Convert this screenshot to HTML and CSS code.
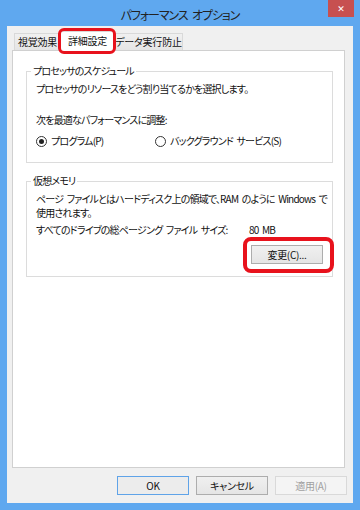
FILE: index.html
```html
<!DOCTYPE html>
<html lang="ja">
<head>
<meta charset="utf-8">
<link rel="stylesheet" href="styles.css">
</head>
<body>
<div class="window">
  <div class="titlebar">
    <span class="title">パフォーマンス オプション</span>
    <span class="close">✕</span>
  </div>
  <div class="client">
    <div class="tabs">
      <div class="tab">視覚効果</div>
      <div class="tab selected">詳細設定</div>
      <div class="tab">データ実行防止</div>
    </div>
    <div class="panel">
      <fieldset class="group g1">
        <legend>プロセッサのスケジュール</legend>
        <div class="line">プロセッサのリソースをどう割り当てるかを選択します。</div>
        <div class="line adjust">次を最適なパフォーマンスに調整:</div>
        <div class="radios">
          <span class="radio checked"><span class="dot"></span>プログラム(P)</span>
          <span class="radio"><span class="dot"></span>バックグラウンド サービス(S)</span>
        </div>
      </fieldset>
      <fieldset class="group g2">
        <legend>仮想メモリ</legend>
        <div class="para">ページ ファイルとはハードディスク上の領域で、RAM のように Windows で</div>
        <div class="para">使用されます。</div>
        <div class="size-row"><span>すべてのドライブの総ページング ファイル サイズ:</span><span>80 MB</span></div>
        <div class="btn-row"><span class="btn marked">変更(C)...</span></div>
      </fieldset>
    </div>
    <div class="buttons">
      <span class="btn default">OK</span>
      <span class="btn">キャンセル</span>
      <span class="btn disabled">適用(A)</span>
    </div>
  </div>
</div>
</body>
</html>
```
FILE: styles.css
```css
* { box-sizing: border-box; }
html, body { margin: 0; padding: 0; }
body {
  width: 360px;
  height: 510px;
  font-family: "Noto Sans CJK JP", "Noto Sans", sans-serif;
  font-feature-settings: "palt";
  font-size: 10px;
  letter-spacing: -0.8px;
  word-spacing: 2px;
  color: #111;
  overflow: hidden;
  white-space: nowrap;
}
.window {
  width: 360px;
  height: 510px;
  background: #5fa8ef;
  padding: 0 7px 7px 7px;
  display: flex;
  flex-direction: column;
}
.titlebar {
  position: relative;
  height: 26px;
  display: flex;
  justify-content: center;
  align-items: center;
}
.title {
  font-size: 12px;
  letter-spacing: -1.1px;
  word-spacing: 3px;
  color: #222;
  padding-top: 2px;
}
.close {
  position: absolute;
  top: 0;
  right: -1px;
  display: flex;
  align-items: center;
  justify-content: center;
  width: 26px;
  height: 17px;
  background: #c75050;
  color: #fff;
  font-family: "DejaVu Sans", sans-serif;
  letter-spacing: 0;
  font-size: 9px;
  font-weight: bold;
}
.client {
  flex: 1;
  background: #f0f0f0;
  padding: 5px 6px 8px 5px;
  display: flex;
  flex-direction: column;
}
.tabs {
  height: 19px;
  display: flex;
  align-items: flex-end;
  padding-left: 2px;
}
.tab {
  flex-shrink: 0;
  height: 17px;
  line-height: 15px;
  border: 1px solid #d9d9d9;
  border-bottom: none;
  background: linear-gradient(#f0f0f0, #e5e5e5);
  text-align: center;
  padding: 0;
  margin-right: -1px;
  letter-spacing: -0.2px;
}
.tab:nth-child(1) { width: 47px; }
.tab:nth-child(3) { width: 69px; }
.tab.selected {
  position: relative;
  width: 55px;
  height: 20px;
  margin-bottom: -1px;
  background: #fff;
  z-index: 2;
  line-height: 17px;
}
.tab.selected::after {
  content: "";
  position: absolute;
  left: -3px;
  right: -2px;
  top: -4px;
  bottom: -3px;
  border: 3.5px solid #e8121c;
  border-radius: 6px;
}
.panel {
  flex: 1;
  margin-right: 2px;
  background: #fff;
  border: 1px solid #d0d0d0;
  padding: 13px 11px 0 13px;
  display: flex;
  flex-direction: column;
}
.group {
  margin: 0;
  border: 1px solid #dcdcdc;
  padding: 0 9px;
  min-inline-size: 0;
}
.group legend {
  padding: 0 2px;
  margin-left: -5px;
  line-height: 14px;
  height: 14px;
}
.line { line-height: 14px; }
.g1 { padding-top: 4px; padding-bottom: 14px; }
.g1 .adjust { margin-top: 17px; }
.radios {
  margin-top: 7px;
  display: flex;
  line-height: 14px;
}
.radio {
  display: inline-flex;
  align-items: center;
  gap: 4px;
}
.radio:first-child { width: 119px; }
.dot {
  width: 11px;
  height: 11px;
  border-radius: 50%;
  border: 1px solid #333;
  background: #fff;
  display: inline-flex;
  align-items: center;
  justify-content: center;
}
.radio.checked .dot::after {
  content: "";
  width: 5px;
  height: 5px;
  border-radius: 50%;
  background: #222;
}
.g2 { margin-top: 11px; padding-top: 4px; padding-bottom: 12px; }
.para { line-height: 14px; height: 14px; }
.size-row {
  margin-top: 3px;
  line-height: 14px;
  display: grid;
  grid-template-columns: 213px auto;
}
.btn-row {
  margin-top: 8px;
  display: flex;
  justify-content: flex-end;
}
.btn {
  width: 72px;
  height: 19px;
  display: inline-flex;
  align-items: center;
  justify-content: center;
  border: 1px solid #adadad;
  background: linear-gradient(#f0f0f0, #e5e5e5);
  color: #111;
  letter-spacing: -0.3px;
}
.btn.marked {
  position: relative;
}
.btn.marked::after {
  content: "";
  position: absolute;
  left: -9px;
  right: -12px;
  top: -9px;
  bottom: -10px;
  border: 4px solid #e8121c;
  border-radius: 8px;
}
.buttons {
  margin-top: 8px;
  display: flex;
  justify-content: flex-end;
  gap: 7px;
}
.btn.default { border-color: #5fa3e8; background: #ececec; }
.btn.disabled { border-color: #d9d9d9; background: #f4f4f4; color: #a0a0a0; }
```
